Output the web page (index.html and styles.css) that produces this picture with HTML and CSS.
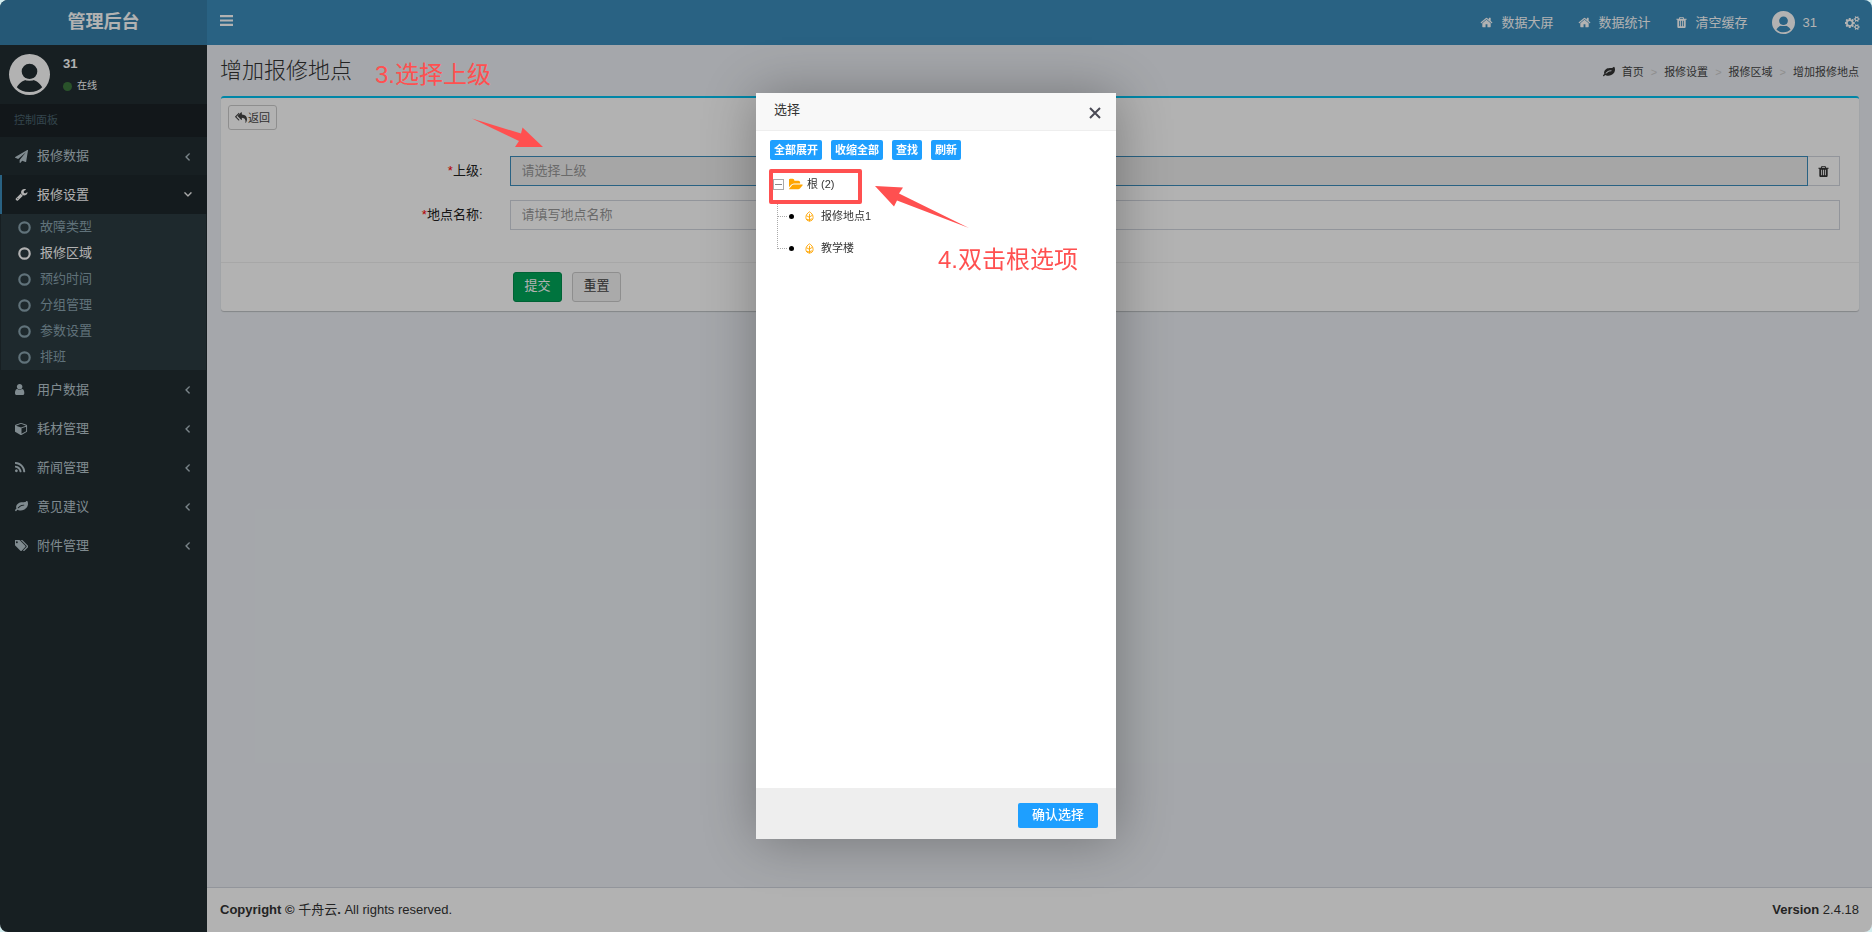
FILE: index.html
```html
<!DOCTYPE html>
<html lang="zh-CN">
<head>
    <meta charset="UTF-8">
    <meta name="viewport" content="width=device-width, initial-scale=1.0">
    <title>管理后台</title>
    <link rel="stylesheet" href="styles.css">
</head>
<body>
    <svg class="sprite" aria-hidden="true">
        <symbol id="home" viewBox="0 0 1792 1792"><path d="M1472 992v480q0 26-19 45t-45 19h-384v-384h-256v384h-384q-26 0-45-19t-19-45v-480q0-1 .5-3t.5-3l575-474 575 474q1 2 1 6zm223-69l-62 74q-8 9-21 11h-3q-13 0-21-7l-692-577-692 577q-12 8-24 7-13-2-21-11l-62-74q-8-10-7-23.500t11-21.500l719-599q32-26 76-26t76 26l244 204v-195q0-14 9-23t23-9h192q14 0 23 9t9 23v408l219 182q10 8 11 21.500t-7 23.500z"/></symbol>
        <symbol id="trash" viewBox="0 0 1792 1792"><path d="M704 1376v-704q0-14-9-23t-23-9h-64q-14 0-23 9t-9 23v704q0 14 9 23t23 9h64q14 0 23-9t9-23zm256 0v-704q0-14-9-23t-23-9h-64q-14 0-23 9t-9 23v704q0 14 9 23t23 9h64q14 0 23-9t9-23zm256 0v-704q0-14-9-23t-23-9h-64q-14 0-23 9t-9 23v704q0 14 9 23t23 9h64q14 0 23-9t9-23zm-544-992h448l-48-117q-7-9-17-11h-317q-10 2-17 11zm928 32v64q0 14-9 23t-23 9h-96v948q0 83-47 143.500t-113 60.500h-832q-66 0-113-58.500t-47-141.500v-952h-96q-14 0-23-9t-9-23v-64q0-14 9-23t23-9h309l70-167q15-37 54-63t79-26h320q40 0 79 26t54 63l70 167h309q14 0 23 9t9 23z"/></symbol>
        <symbol id="angle" viewBox="0 0 1792 1792"><path d="M1203 544q0 13-10 23l-393 393 393 393q10 10 10 23t-10 23l-50 50q-10 10-23 10t-23-10l-466-466q-10-10-10-23t10-23l466-466q10-10 23-10t23 10l50 50q10 10 10 23z" stroke="currentColor" stroke-width="60"/></symbol>
        <symbol id="plane" viewBox="0 0 1792 1792"><path d="M1764 11q33 24 27 64l-256 1536q-5 29-32 45-14 8-31 8-11 0-24-5l-453-185-242 295q-18 23-49 23-13 0-22-4-19-7-30.500-23.500t-11.500-36.500v-349l864-1059-1069 925-395-162q-37-14-40-55-2-40 32-59l1664-960q15-9 32-9 20 0 36 11z"/></symbol>
        <symbol id="wrench" viewBox="0 0 1792 1792"><path d="M448 1472q0-26-19-45t-45-19-45 19-19 45 19 45 45 19 45-19 19-45zm644-420l-682 682q-37 37-90 37-52 0-91-37l-106-108q-38-36-38-90 0-53 38-91l681-681q39 98 114.500 173.500t173.500 114.500zm634-435q0 39-23 106-47 134-164.500 217.500t-258.500 83.500q-185 0-316.500-131.500t-131.500-316.500 131.500-316.500 316.500-131.500q58 0 121.500 16.500t107.500 46.500q16 11 16 28t-16 28l-293 169v224l193 107q5-3 79-48.500t135.500-81 70.500-35.500q15 0 23.500 10t8.500 25z"/></symbol>
        <symbol id="user" viewBox="256 0 1792 1792"><path d="M1536 1399q0 109-62.500 187t-150.500 78h-854q-88 0-150.500-78t-62.500-187q0-85 8.500-160.500t31.500-152 58.500-131 94-89 134.500-34.500q131 128 313 128t313-128q76 0 134.500 34.500t94 89 58.500 131 31.500 152 8.500 160.500zm-256-887q0 159-112.500 271.500t-271.500 112.500-271.500-112.500-112.500-271.500 112.500-271.500 271.500-112.500 271.500 112.500 112.500 271.500z"/></symbol>
        <symbol id="cube" viewBox="0 0 1792 1792"><path d="M896 1629l640-349v-636l-640 233v752zm-64-865l698-254-698-254-698 254zm832-252v768q0 35-18 65t-49 47l-704 384q-28 16-61 16t-61-16l-704-384q-31-17-49-47t-18-65v-768q0-40 23-73t61-47l704-256q22-8 44-8t44 8l704 256q38 14 61 47t23 73z"/></symbol>
        <symbol id="rss" viewBox="192 0 1792 1792"><path d="M576 1344q0 80-56 136t-136 56-136-56-56-136 56-136 136-56 136 56 56 136zm512 123q2 28-17 48-18 21-47 21h-135q-25 0-43-16.500t-20-41.500q-22-229-184.500-391.500t-391.500-184.500q-25-2-41.500-20t-16.500-43v-135q0-29 21-47 17-17 43-17h5q160 13 306 80.500t259 181.500q114 113 181.500 259t80.500 306zm512 2q2 27-18 47-18 20-46 20h-143q-26 0-44.500-17.500t-19.500-42.500q-12-215-101-408.500t-231.500-336-336-231.500-408.500-102q-25-1-42.500-19.500t-17.500-43.500v-143q0-28 20-46 18-18 44-18h3q262 13 501.500 120t425.500 294q187 186 294 425.500t120 501.500z"/></symbol>
        <symbol id="leaf" viewBox="0 0 1792 1792"><path d="M1280 704q0-26-19-45t-45-19q-172 0-318 49.500t-259.500 134-235.500 219.500q-19 21-19 45 0 26 19 45t45 19q24 0 45-19 27-24 74-71t67-66q137-124 268.500-176t313.500-52q26 0 45-19t19-45zm512-198q0 95-20 193-46 224-184.500 383t-357.500 268q-214 108-438 108-148 0-286-47-15-5-88-42t-96-37q-16 0-39.500 32t-45 70-52.500 70-60 32q-43 0-63.500-17.500t-45.500-59.500q-2-4-6-11t-5.500-10-3-9.500-1.500-13.500q0-35 31-73.500t68-65.500 68-56 31-48q0-4-14-38t-16-44q-9-51-9-104 0-115 43.500-220t119-184.500 170.500-139 204-95.500q55-18 145-25.500t179.500-9 178.500-6 163.500-24 113.500-56.500l29.500-29.500 29.500-28 27-20 36.500-16 43.500-4.500q39 0 70.500 46t47.500 112 24 124 8 96z"/></symbol>
        <symbol id="tags" viewBox="0 0 1792 1792"><path d="M384 448q0-53-37.500-90.500t-90.500-37.500-90.500 37.500-37.500 90.500 37.500 90.500 90.500 37.500 90.500-37.500 37.500-90.500zm1067 576q0 53-37 90l-491 492q-39 37-91 37-53 0-90-37l-715-716q-38-37-64.500-101t-26.500-117v-416q0-52 38-90t90-38h416q53 0 117 26.500t102 64.500l715 714q37 39 37 91zm384 0q0 53-37 90l-491 492q-39 37-91 37-36 0-59-14t-53-45l470-470q37-37 37-90 0-52-37-91l-715-714q-38-38-102-64.500t-117-26.500h224q53 0 117 26.500t102 64.500l715 714q37 39 37 91z"/></symbol>
        <symbol id="cogs" viewBox="0 0 1856 1792"><path d="M832 896q0-106-75-181t-181-75-181 75-75 181 75 181 181 75 181-75 75-181zm768 512q0-52-38-90t-90-38-90 38-38 90q0 53 37.500 90.500t90.500 37.500 90.500-37.500 37.500-90.500zm0-1024q0-52-38-90t-90-38-90 38-38 90q0 53 37.500 90.500t90.500 37.500 90.500-37.500 37.500-90.500zm-384 421v185q0 10-7 19.500t-16 10.500l-155 24q-11 35-32 76 34 48 90 115 7 11 7 20 0 12-7 19-23 30-82.500 89.500t-78.500 59.500q-11 0-21-7l-115-90q-37 19-77 31-11 108-23 155-7 24-30 24h-186q-11 0-20-7.500t-10-17.500l-23-153q-34-10-75-31l-118 89q-7 7-20 7-11 0-21-8-144-133-144-160 0-9 7-19 10-14 41-53t47-61q-23-44-35-82l-152-24q-10-1-17-9.500t-7-19.500v-185q0-10 7-19.500t16-10.500l155-24q11-35 32-76-34-48-90-115-7-11-7-20 0-12 7-20 22-30 82-89t79-59q11 0 21 7l115 90q34-18 77-32 11-108 23-154 7-24 30-24h186q11 0 20 7.500t10 17.500l23 153q34 10 75 31l118-89q8-7 20-7 11 0 21 8 144 133 144 160 0 8-7 19-12 16-42 54t-45 60q23 48 34 82l152 23q10 2 17 10.500t7 19.500zm640 533v140q0 16-149 31-12 27-30 52 51 113 51 138 0 4-4 7-122 71-124 71-8 0-46-47t-52-68q-20 2-30 2t-30-2q-14 21-52 68t-46 47q-2 0-124-71-4-3-4-7 0-25 51-138-18-25-30-52-149-15-149-31v-140q0-16 149-31 13-29 30-52-51-113-51-138 0-4 4-7 4-2 35-20t59-34 30-16q8 0 46 46.500t52 67.500q20-2 30-2t30 2q51-71 92-112l6-2q4 0 124 70 4 3 4 7 0 25-51 138 17 23 30 52 149 15 149 31zm0-1024v140q0 16-149 31-12 27-30 52 51 113 51 138 0 4-4 7-122 71-124 71-8 0-46-47t-52-68q-20 2-30 2t-30-2q-14 21-52 68t-46 47q-2 0-124-71-4-3-4-7 0-25 51-138-18-25-30-52-149-15-149-31v-140q0-16 149-31 13-29 30-52-51-113-51-138 0-4 4-7 4-2 35-20t59-34 30-16q8 0 46 46.500t52 67.500q20-2 30-2t30 2q51-71 92-112l6-2q4 0 124 70 4 3 4 7 0 25-51 138 17 23 30 52 149 15 149 31z"/></symbol>
        <symbol id="reply" viewBox="0 0 1792 1792"><path d="M640 1146v70q0 42-39 59-13 5-25 5-27 0-45-19l-512-512q-19-19-19-45t19-45l512-512q29-31 70-14 39 17 39 59v69l-397 398q-19 19-19 45t19 45zm1152-58q0 58-17 133.500t-38.500 138-48 125-40.500 90.500l-20 40q-8 17-28 17-6 0-9-1-25-8-23-34 43-400-106-565-64-71-170.500-110.500t-267.500-52.500v251q0 42-39 59-13 5-25 5-27 0-45-19l-512-512q-19-19-19-45t19-45l512-512q29-31 70-14 39 17 39 59v262q411 28 599 221 169 173 169 509z"/></symbol>
        <symbol id="folder" viewBox="0 128 1856 1536"><path d="M1815 952q0 31-31 66l-336 396q-43 51-120.500 86.500t-143.500 35.500h-1088q-34 0-60.500-13t-26.500-43q0-31 31-66l336-396q43-51 120.500-86.500t143.500-35.500h1088q34 0 60.500 13t26.500 43zm-343-344v160h-832q-94 0-197 47.500t-164 119.500l-337 396-5 6q0-4-.5-12.500t-.5-12.500v-960q0-92 66-158t158-66h320q92 0 158 66t66 158v32h544q92 0 158 66t66 158z"/></symbol>
        <symbol id="bars" viewBox="0 0 12 12"><path d="M0 1h12v2H0zM0 5h12v2H0zM0 9h12v2H0z"/></symbol>
        <symbol id="ring" viewBox="0 0 12 12"><circle cx="6" cy="6" r="4.800" fill="none" stroke="currentColor" stroke-width="2"/></symbol>
        <symbol id="avatar" viewBox="0 0 42 42"><path fill-rule="evenodd" d="M21 0a21 21 0 1 0 0 42 21 21 0 0 0 0-42zM21 10a8 8 0 1 1 0 16 8 8 0 0 1 0-16zM8 34c3-5 7-8 13-8s10 3 13 8c-3 3-7 5-13 5s-10-2-13-5z"/><path fill="none" stroke="currentColor" stroke-width="2" d="M15 25c4 2 8 2 12 0"/></symbol>
        <symbol id="leafnode" viewBox="0 0 10 12"><path fill="none" stroke="currentColor" d="M5 11.500V3M5 .8C3 2 1 4 1 7c0 2.500 1.500 4 4 4s4-1.500 4-4C9 4 7 2 5 .8zM1.500 5 5 7M8.500 4.500 5 6.500M2 9l3 1M8 8.500 5 9.500"/></symbol>
    </svg>

    <div class="wrapper">
        <aside class="sidebar">
            <a href="#" class="logo">管理后台</a>
            <div class="user-panel">
                <svg class="avatar"><use href="#avatar"/></svg>
                <div class="info">
                    <strong>31</strong>
                    <a href="#"><i class="online"></i>在线</a>
                </div>
            </div>
            <div class="menu-header">控制面板</div>
            <nav class="menu">
                <a href="#"><svg class="icon"><use href="#plane"/></svg>报修数据<svg class="icon arrow"><use href="#angle"/></svg></a>
                <a href="#" class="active"><svg class="icon"><use href="#wrench"/></svg>报修设置<svg class="icon arrow down"><use href="#angle"/></svg></a>
                <div class="submenu">
                    <a href="#"><svg class="icon"><use href="#ring"/></svg>故障类型</a>
                    <a href="#" class="current"><svg class="icon"><use href="#ring"/></svg>报修区域</a>
                    <a href="#"><svg class="icon"><use href="#ring"/></svg>预约时间</a>
                    <a href="#"><svg class="icon"><use href="#ring"/></svg>分组管理</a>
                    <a href="#"><svg class="icon"><use href="#ring"/></svg>参数设置</a>
                    <a href="#"><svg class="icon"><use href="#ring"/></svg>排班</a>
                </div>
                <a href="#"><svg class="icon"><use href="#user"/></svg>用户数据<svg class="icon arrow"><use href="#angle"/></svg></a>
                <a href="#"><svg class="icon"><use href="#cube"/></svg>耗材管理<svg class="icon arrow"><use href="#angle"/></svg></a>
                <a href="#"><svg class="icon"><use href="#rss"/></svg>新闻管理<svg class="icon arrow"><use href="#angle"/></svg></a>
                <a href="#"><svg class="icon"><use href="#leaf"/></svg>意见建议<svg class="icon arrow"><use href="#angle"/></svg></a>
                <a href="#"><svg class="icon"><use href="#tags"/></svg>附件管理<svg class="icon arrow"><use href="#angle"/></svg></a>
            </nav>
        </aside>

        <div class="main">
            <header class="navbar">
                <button class="toggle" aria-label="切换菜单"><svg class="icon"><use href="#bars"/></svg></button>
                <nav class="nav">
                    <a href="#"><svg class="icon"><use href="#home"/></svg>数据大屏</a>
                    <a href="#"><svg class="icon"><use href="#home"/></svg>数据统计</a>
                    <a href="#"><svg class="icon"><use href="#trash"/></svg>清空缓存</a>
                    <a href="#" class="nav-user"><svg class="avatar small"><use href="#avatar"/></svg>31</a>
                    <a href="#" aria-label="设置"><svg class="icon cogs"><use href="#cogs"/></svg></a>
                </nav>
            </header>

            <section class="content-header">
                <h1>增加报修地点</h1>
                <nav class="breadcrumb">
                    <svg class="icon"><use href="#leaf"/></svg>
                    <a href="#">首页</a><i>&gt;</i><a href="#">报修设置</a><i>&gt;</i><a href="#">报修区域</a><i>&gt;</i><a href="#">增加报修地点</a>
                </nav>
            </section>

            <section class="box">
                <div class="box-header">
                    <a href="#" class="back"><svg class="icon"><use href="#reply"/></svg>返回</a>
                </div>
                <form>
                    <div class="form-row">
                        <label for="parent"><span class="required">*</span>上级:</label>
                        <div class="input-group">
                            <input type="text" id="parent" class="readonly" placeholder="请选择上级" readonly>
                            <button type="button" aria-label="清除"><svg class="icon"><use href="#trash"/></svg></button>
                        </div>
                    </div>
                    <div class="form-row">
                        <label for="name"><span class="required">*</span>地点名称:</label>
                        <div class="input-group">
                            <input type="text" id="name" placeholder="请填写地点名称">
                        </div>
                    </div>
                    <div class="form-footer">
                        <button type="button" class="btn submit">提交</button>
                        <button type="reset" class="btn">重置</button>
                    </div>
                </form>
            </section>

            <footer class="footer">
                <div><strong>Copyright © <span class="company">千舟云</span>.</strong> All rights reserved.</div>
                <div class="version"><strong>Version</strong> 2.4.18</div>
            </footer>
        </div>

        <div class="shade"></div>
    </div>

    <div class="modal" role="dialog" aria-labelledby="modal-title">
        <div class="modal-title">
            <span id="modal-title">选择</span>
            <button class="close" aria-label="关闭"><svg viewBox="0 0 12 12"><path d="M1 1l10 10M11 1L1 11"/></svg></button>
        </div>
        <div class="modal-body">
            <div class="tools">
                <button>全部展开</button>
                <button>收缩全部</button>
                <button>查找</button>
                <button>刷新</button>
            </div>
            <ul class="tree">
                <li>
                    <div class="node"><span class="minus"></span><svg class="folder"><use href="#folder"/></svg>根 (2)</div>
                    <ul>
                        <li><span class="dot"></span><svg class="leaf"><use href="#leafnode"/></svg>报修地点1</li>
                        <li><span class="dot"></span><svg class="leaf"><use href="#leafnode"/></svg>教学楼</li>
                    </ul>
                </li>
            </ul>
        </div>
        <div class="modal-footer"><button>确认选择</button></div>
    </div>

    <!-- guide marks -->
    <div class="guide guide-3">3.选择上级</div>
    <div class="guide guide-4">4.双击根选项</div>
    <div class="guide-frame"></div>
    <svg class="guide-arrow arrow-3" viewBox="0 0 72 30"><path d="M0 0.500L49 15.500 50.500 9.500 71 29H43L47 23z"/></svg>
    <svg class="guide-arrow arrow-4" viewBox="0 0 94 43"><path d="M0 0L28 1.500 24 7.500 94 42 22 14.500 19 20.500z"/></svg>
</body>
</html>
```
FILE: styles.css
```css
* { box-sizing: border-box; }

body {
    margin: 0;
    background: #d3eef0;
    color: #333;
    font-family: "Liberation Sans", Arial, "Noto Sans CJK SC", sans-serif;
    font-size: 13px;
    line-height: 18px;
}

a { color: inherit; text-decoration: none; }
button, input { font: inherit; }
button { cursor: pointer; }
ul { list-style: none; margin: 0; padding: 0; }
.sprite { position: absolute; width: 0; height: 0; }
.icon { width: 13px; height: 13px; fill: currentColor; flex: none; }

.wrapper {
    position: relative;
    display: flex;
    min-height: 100vh;
    border-radius: 8px;
    overflow: hidden;
    background: #ecf0f5;
}
.shade {
    position: absolute;
    inset: 0;
    background: rgba(0, 0, 0, 0.3);
}

/* sidebar */
.sidebar {
    width: 207px;
    flex: none;
    background: #222d32;
    color: #b8c7ce;
}
.logo {
    display: block;
    height: 45px;
    line-height: 45px;
    text-align: center;
    background: #367fa9;
    color: #fff;
    font-size: 18px;
    font-weight: bold;
}
.user-panel {
    display: flex;
    gap: 13px;
    height: 59px;
    padding: 9px;
    color: #fff;
}
.avatar { width: 41px; height: 41px; fill: #fff; color: #fff; flex: none; }
.info { display: flex; flex-direction: column; gap: 4px; padding-top: 1px; }
.info a { display: flex; align-items: center; gap: 5px; font-size: 10px; }
.online { width: 9px; height: 9px; border-radius: 50%; background: #3c763d; }
.menu-header {
    height: 33px;
    line-height: 33px;
    padding-left: 14px;
    background: #1a2226;
    color: #4b646f;
    font-size: 11px;
}
.menu > a {
    display: flex;
    align-items: center;
    gap: 9px;
    height: 38px;
    padding: 0 13px;
    border-left: 2px solid transparent;
}
.menu > a .arrow { margin-left: auto; }
.menu > a .down { transform: rotate(-90deg); }
.menu > .active { height: 39px; background: #1e282c; border-left-color: #3c8dbc; color: #fff; }
.submenu { margin: 0 1px; background: #2c3b41; }
.submenu ~ a { height: 39px; }
.submenu a {
    display: flex;
    align-items: center;
    gap: 9px;
    height: 26px;
    padding-left: 17px;
    color: #8aa4af;
}
.submenu .current { color: #fff; }

/* top bar */
.main { flex: 1; min-width: 0; display: flex; flex-direction: column; }
.navbar {
    display: flex;
    justify-content: space-between;
    align-items: center;
    height: 45px;
    padding: 0 12px 0 13px;
    background: #3c8dbc;
    color: #fff;
}
.toggle { display: flex; padding: 0; margin-bottom: 4px; border: 0; background: none; color: #fff; }
.nav { display: flex; align-items: center; gap: 24px; }
.nav a { display: flex; align-items: center; gap: 8px; }
.nav .nav-user { margin-right: 4px; }
.avatar.small { width: 23px; height: 23px; }
.icon.cogs { width: 15px; height: 14px; }

/* page title */
.content-header {
    display: flex;
    justify-content: space-between;
    align-items: center;
    padding: 13px 13px 12px;
}
h1 { margin: 0; font-size: 22px; font-weight: 300; line-height: 26px; }
.breadcrumb { display: flex; align-items: center; padding-top: 2px; font-size: 11px; }
.breadcrumb a { color: #444; }
.breadcrumb .icon { margin-right: 7px; width: 12px; height: 12px; }
.breadcrumb i { padding: 0 7px; color: #ccc; font-style: normal; }

/* form */
.box {
    margin: 0 13px 0 14px;
    background: #fff;
    border-top: 2px solid #00c0ef;
    border-radius: 3px;
    box-shadow: 0 1px 1px rgba(0, 0, 0, 0.2);
}
.box-header { padding: 7px 7px 26px; }
.back {
    display: inline-flex;
    align-items: center;
    gap: 1px;
    height: 25px;
    padding: 0 6px;
    border: 1px solid #ccc;
    border-radius: 3px;
    color: #444;
    font-size: 11px;
}
.back .icon { width: 12px; height: 12px; }
.form-row {
    display: grid;
    grid-template-columns: 16% 1fr;
    gap: 27px;
    align-items: center;
    padding: 0 19px 0 3px;
    margin-bottom: 14px;
}
.form-row label { text-align: right; color: #222; }
.required { color: #f00; }
.input-group { display: flex; height: 30px; }
.input-group input {
    flex: 1;
    min-width: 0;
    padding: 0 11px;
    border: 1px solid #d2d6de;
    border-radius: 0;
    background: #fff;
}
.input-group .readonly { background: #eee; border-color: #3c8dbc; }
.input-group input::placeholder { color: #999; }
.input-group button {
    display: flex;
    justify-content: center;
    align-items: center;
    width: 32px;
    border: 1px solid #d2d6de;
    border-left: 0;
    background: #fff;
    color: #333;
}
.form-footer {
    display: flex;
    gap: 10px;
    margin-top: 32px;
    padding: 9px 0 9px 292px;
    border-top: 1px solid #f0f0f0;
}
.btn {
    width: 49px;
    height: 30px;
    padding: 0 0 2px;
    border: 1px solid #ccc;
    border-radius: 3px;
    background: #f4f4f4;
    color: #444;
}
.btn.submit { background: #00a65a; border-color: #008d4c; color: #fff; }

.footer {
    display: flex;
    justify-content: space-between;
    margin-top: auto;
    padding: 13px;
    border-top: 1px solid #d2d6de;
    background: #fff;
}
.company { font-weight: normal; }

/* dialog */
.modal {
    position: fixed;
    inset: 0;
    margin: auto;
    display: flex;
    flex-direction: column;
    width: 360px;
    height: 80vh;
    background: #fff;
    box-shadow: 1px 1px 50px rgba(0, 0, 0, 0.3);
}
.modal-title {
    display: flex;
    justify-content: space-between;
    height: 38px;
    padding: 8px 15px 0 18px;
    border-bottom: 1px solid #eee;
    background: #f8f8f8;
}
.close { width: 13px; height: 24px; padding: 4px 0 0; border: 0; background: none; }
.close svg { width: 12px; height: 12px; fill: none; stroke: #4a4a55; stroke-width: 2; }
.modal-body { flex: 1; padding: 9px 14px; font-size: 11px; }
.tools { display: flex; gap: 9px; }
.tools button, .modal-footer button {
    border: 0;
    border-radius: 2px;
    background: #1e9fff;
    color: #fff;
    font-weight: bold;
}
.tools button { height: 20px; padding: 0 4px; line-height: 18px; }
.tree { margin-top: 8px; }
.node { display: flex; align-items: center; height: 32px; padding-left: 3px; }
.minus {
    width: 11px;
    height: 11px;
    margin-right: 5px;
    border: 1px solid #aaa;
    background: linear-gradient(#888, #888) center / 7px 1px no-repeat;
}
.folder { width: 14px; height: 13px; margin-right: 4px; fill: #ffa500; }
.tree ul { padding-left: 7px; }
.tree ul li {
    position: relative;
    display: flex;
    align-items: center;
    height: 32px;
    padding-left: 12px;
}
/* dotted branch: down the left side, then across to the bullet */
.tree ul li::before {
    content: "";
    position: absolute;
    left: 0;
    top: -16px;
    width: 9px;
    height: 32px;
    border-left: 1px dotted #aaa;
    border-bottom: 1px dotted #aaa;
}
.tree ul li:first-child::before { top: 0; height: 16px; }
.dot { width: 5px; height: 5px; border-radius: 50%; background: #000; }
.leaf { width: 9px; height: 11px; margin: 0 7px 0 11px; color: #ffa500; }
.modal-footer {
    display: flex;
    justify-content: flex-end;
    align-items: center;
    height: 51px;
    padding: 4px 18px 0;
    background: #eee;
}
.modal-footer button { height: 25px; padding: 0 14px; font-weight: 500; }

/* guide marks */
.guide { position: absolute; color: #ff5050; font-size: 24px; line-height: 30px; }
.guide-3 { left: 375px; top: 60px; }
.guide-4 { left: 938px; top: 245px; }
.guide-frame {
    position: absolute;
    left: 769px;
    top: 169px;
    width: 93px;
    height: 35px;
    border: 4px solid #ff5050;
    border-radius: 2px;
}
.guide-arrow { position: absolute; fill: #ff5050; }
.arrow-3 { left: 472px; top: 118px; width: 72px; height: 30px; }
.arrow-4 { left: 875px; top: 186px; width: 94px; height: 43px; }
```
